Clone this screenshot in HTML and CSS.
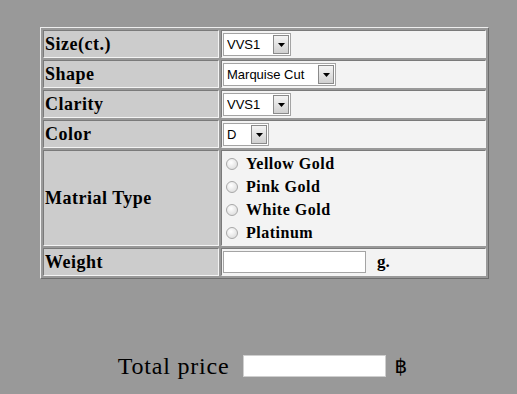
FILE: index.html
```html
<!DOCTYPE html>
<html>

<head>
  <meta charset="utf-8">
  <title>Diamond Price</title>
  <meta name="viewport" content="width=device-width, initial-scale=1">
  <link rel="stylesheet" href="styles.css">
</head>
<body>
  <div class="order">
    <table class="spec-table">
      <tr class="row-spec">
        <td class="caption">Size(ct.)</td>
        <td class="field">
          <span class="pick pick-short">
            <select><option>VVS1</option></select>
            <span class="pick-btn"><svg width="7" height="4" viewBox="0 0 7 4"><path d="M0 0h7L3.5 4z" fill="#000"/></svg></span>
          </span>
        </td>
      </tr>
      <tr class="row-spec">
        <td class="caption">Shape</td>
        <td class="field">
          <span class="pick pick-long">
            <select><option>Marquise Cut</option></select>
            <span class="pick-btn"><svg width="7" height="4" viewBox="0 0 7 4"><path d="M0 0h7L3.5 4z" fill="#000"/></svg></span>
          </span>
        </td>
      </tr>
      <tr class="row-spec">
        <td class="caption">Clarity</td>
        <td class="field">
          <span class="pick pick-short">
            <select><option>VVS1</option></select>
            <span class="pick-btn"><svg width="7" height="4" viewBox="0 0 7 4"><path d="M0 0h7L3.5 4z" fill="#000"/></svg></span>
          </span>
        </td>
      </tr>
      <tr class="row-spec">
        <td class="caption">Color</td>
        <td class="field">
          <span class="pick pick-tiny">
            <select><option>D</option></select>
            <span class="pick-btn"><svg width="7" height="4" viewBox="0 0 7 4"><path d="M0 0h7L3.5 4z" fill="#000"/></svg></span>
          </span>
        </td>
      </tr>
      <tr class="row-material">
        <td class="caption">Matrial Type</td>
        <td class="field">
          <label class="metal"><input type="radio" name="metal"> Yellow Gold</label>
          <label class="metal"><input type="radio" name="metal"> Pink Gold</label>
          <label class="metal"><input type="radio" name="metal"> White Gold</label>
          <label class="metal"><input type="radio" name="metal"> Platinum</label>
        </td>
      </tr>
      <tr class="row-spec">
        <td class="caption">Weight</td>
        <td class="field"><input type="text" class="weight-box"><span class="unit">g.</span></td>
      </tr>
    </table>

    <div class="total">
      <span class="total-label">Total price</span>
      <input type="text" class="total-box">
      <span class="baht">฿</span>
    </div>
  </div>
</body>
</html>
```

FILE: styles.css
```css
/* basic style */
body {
  margin: 0;
  background: #999999;
  font-family: "Liberation Serif", "DejaVu Serif", serif;
  color: #000;
}

div.order {
  padding-top: 27px;
}

/* table style */
table.spec-table {
  margin-left: 40px;
  width: 449px;
  border-spacing: 2px;
  border: 1px solid;
  border-color: #eeeeee #6e6e6e #6e6e6e #eeeeee;
}

table.spec-table td {
  border: 1px solid;
  border-color: #7a7a7a #f4f4f4 #f4f4f4 #7a7a7a;
  padding: 0 1px;
  vertical-align: middle;
}

tr.row-spec {
  height: 28px;
}

tr.row-material {
  height: 96px;
}

td.caption {
  width: 172px;
  background: #cccccc;
  font-weight: bold;
  font-size: 18px;
  letter-spacing: 0.5px;
}

td.field {
  background: #f3f3f3;
}

/* dropdowns */
.pick {
  display: inline-flex;
  box-sizing: border-box;
  height: 23px;
  border: 1px solid #a4a4a4;
  background: white;
  vertical-align: middle;
  margin-top: 1px;
}

.pick select {
  appearance: none;
  -webkit-appearance: none;
  flex: 1;
  min-width: 0;
  border: 0;
  margin: 0;
  padding: 0 0 0 3px;
  background: transparent;
  font-family: "Liberation Sans", Arial, sans-serif;
  font-size: 13px;
  color: #000;
  outline: none;
}

.pick-short { width: 68px; }
.pick-long { width: 113px; }
.pick-tiny { width: 46px; }

.pick-btn {
  display: flex;
  align-items: center;
  justify-content: center;
  box-sizing: border-box;
  width: 16px;
  margin: 1px;
  border: 1px solid #8a8a8a;
  background: linear-gradient(#f4f4f4, #d0d0d0);
}

/* radios */
label.metal {
  display: flex;
  align-items: center;
  height: 23px;
  font-weight: bold;
  font-size: 16px;
  letter-spacing: 0.5px;
}

label.metal input {
  appearance: none;
  -webkit-appearance: none;
  box-sizing: border-box;
  width: 12px;
  height: 12px;
  margin: 0 8px 0 3px;
  border: 1px solid #a8a8a8;
  border-radius: 50%;
  background: radial-gradient(circle at 40% 35%, #ffffff, #d6d6d6);
}

/* weight */
input.weight-box {
  box-sizing: border-box;
  width: 143px;
  height: 22px;
  margin: 0;
  border: 1px solid #a4a4a4;
  background: white;
  vertical-align: middle;
}

span.unit {
  margin-left: 11px;
  font-weight: bold;
  font-size: 17px;
  vertical-align: middle;
}

/* total */
div.total {
  display: flex;
  align-items: center;
  justify-content: center;
  height: 30px;
  margin-top: 72px;
  padding-left: 8px;
}

span.total-label {
  font-size: 24px;
  letter-spacing: 0.8px;
}

input.total-box {
  box-sizing: border-box;
  width: 143px;
  height: 22px;
  margin: 0 9px 0 13px;
  border: 1px solid #cfcfcf;
  background: white;
}

span.baht {
  font-family: "DejaVu Sans", sans-serif;
  font-size: 20px;
}
```
